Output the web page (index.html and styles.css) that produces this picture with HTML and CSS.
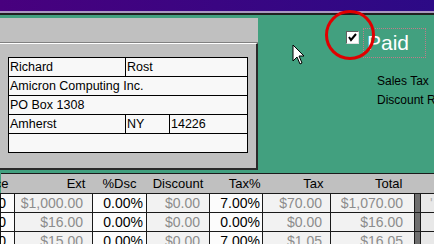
FILE: index.html
```html
<!DOCTYPE html>
<html lang="en">
<head>
    <meta charset="UTF-8">
    <title>Invoice</title>
    <link rel="stylesheet" href="styles.css">
</head>
<body>
    <div class="titlebar"></div>
    <div class="titlerule"></div>

    <div class="main">
        <div class="panel">
            <div class="band"></div>
            <div class="inner">
                <table class="address">
                    <colgroup>
                        <col class="w-first"><col class="w-state"><col>
                    </colgroup>
                    <tr><td>Richard</td><td colspan="2">Rost</td></tr>
                    <tr><td colspan="3">Amicron Computing Inc.</td></tr>
                    <tr><td colspan="3">PO Box 1308</td></tr>
                    <tr><td>Amherst</td><td>NY</td><td>14226</td></tr>
                    <tr class="last"><td colspan="3"></td></tr>
                </table>
            </div>
        </div>

        <div class="side">
            <div class="paid-row">
                <span class="checkbox">
                    <svg width="9" height="9" viewBox="0 0 9 9"><polyline points="1,4 3,7 8,1" fill="none" stroke="#000" stroke-width="2"/></svg>
                </span>
                <span class="paid">Paid</span>
            </div>
            <div class="label">Sales Tax</div>
            <div class="label">Discount Rate</div>

            <!-- overlay: cursor + highlight circle -->
            <svg class="cursor" width="14" height="22" viewBox="0 0 14 22"><path d="M1,1 L1,17 L5,13 L8,20 L10,19 L7,12 L12,12 Z" fill="#fff" stroke="#000" stroke-width="1"/></svg>
            <div class="circle"></div>
        </div>
    </div>

    <div class="grid-wrap">
        <table class="grid">
            <colgroup>
                <col style="width:14px"><col style="width:78px"><col style="width:54px"><col style="width:63px">
                <col style="width:53px"><col style="width:68px"><col style="width:84px"><col style="width:6px"><col style="width:30px">
            </colgroup>
            <tr class="head">
                <th class="cut p6">Price</th>
                <th class="p7">Ext</th>
                <th class="mid">%Dsc</th>
                <th class="mid">Discount</th>
                <th class="p2">Tax%</th>
                <th class="p7">Tax</th>
                <th class="p12">Total</th>
                <th></th>
                <th></th>
            </tr>
            <tr>
                <td class="cut dark p8">1,000.00</td>
                <td class="soft p9">$1,000.00</td>
                <td class="dark p3">0.00%</td>
                <td class="soft p9">$0.00</td>
                <td class="dark p2">7.00%</td>
                <td class="soft p8">$70.00</td>
                <td class="soft p11">$1,070.00</td>
                <td class="sep"></td>
                <td class="extra">'</td>
            </tr>
            <tr>
                <td class="cut dark p8">16.00</td>
                <td class="soft p9">$16.00</td>
                <td class="dark p3">0.00%</td>
                <td class="soft p9">$0.00</td>
                <td class="dark p2">0.00%</td>
                <td class="soft p8">$0.00</td>
                <td class="soft p11">$16.00</td>
                <td class="sep"></td>
                <td class="extra"></td>
            </tr>
            <tr>
                <td class="cut dark p8">15.00</td>
                <td class="soft p9">$15.00</td>
                <td class="dark p3">0.00%</td>
                <td class="soft p9">$0.00</td>
                <td class="dark p2">7.00%</td>
                <td class="soft p8">$1.05</td>
                <td class="soft p11">$16.05</td>
                <td class="sep"></td>
                <td class="extra"></td>
            </tr>
        </table>
    </div>
</body>
</html>
```

FILE: styles.css
```css
body {
    margin: 0;
    width: 434px;
    height: 244px;
    overflow: hidden;
    background-color: #42a07f;
    font-family: "Liberation Sans", Arial, sans-serif;
    color: #000;
}
.titlebar {
    height: 11px;
    background: linear-gradient(90deg, #48007e, #2c0a86);
}
.titlerule {
    height: 2px;
    background-color: #a898c0;
    border-bottom: 2px solid #202020;
}
.main {
    display: flex;
    height: 155px;
}
.panel {
    width: 258px;
    flex-shrink: 0;
    margin-top: 3px;
    display: flex;
    flex-direction: column;
}
.band {
    height: 24px;
    background-color: #c0c0c0;
    border-bottom: 1px solid #808080;
}
.inner {
    flex: 1;
    background-color: #c0c0c0;
    border-top: 1px solid #fff;
    border-right: 2px solid #2a2a2a;
    border-bottom: 2px solid #2a2a2a;
    padding: 13px 0 0 8px;
}
.address {
    width: 240px;
    border-collapse: collapse;
    table-layout: fixed;
    background-color: #f8f8f8;
    font-size: 12.5px;
}
.address .w-first {
    width: 117px;
}
.address .w-state {
    width: 44px;
}
.address td {
    border: 1px solid #000;
    height: 18px;
    padding: 0 1px;
    white-space: nowrap;
    overflow: hidden;
}
.address .last td {
    height: 18px;
}
.side {
    flex: 1;
    position: relative;
    min-width: 0;
}
.paid-row {
    display: flex;
    align-items: flex-start;
    margin-top: 13px;
    padding-left: 88px;
}
.checkbox {
    width: 11px;
    height: 11px;
    margin-top: 3px;
    background-color: #fff;
    border-top: 1px solid #606060;
    border-left: 1px solid #606060;
    border-right: 1px solid #e0e0e0;
    border-bottom: 1px solid #e0e0e0;
    display: flex;
    align-items: center;
    justify-content: center;
}
.paid {
    margin-left: 4px;
    width: 58px;
    height: 28px;
    padding-left: 3px;
    border: 1px dotted #c07c8a;
    color: #fff;
    font-size: 21px;
    line-height: 28px;
}
.label {
    padding-left: 119px;
    font-size: 12px;
    line-height: 19px;
    white-space: nowrap;
}
.paid-row + .label {
    margin-top: 14px;
}
.cursor {
    position: absolute;
    left: 34px;
    top: 29px;
}
.circle {
    position: absolute;
    left: 67px;
    top: -5px;
    width: 44px;
    height: 44px;
    border: 3px solid #e00000;
    border-radius: 50%;
}
.grid-wrap {
    margin-top: 3px;
}
.grid {
    width: 450px;
    border-collapse: collapse;
    table-layout: fixed;
    font-size: 14px;
}
.grid td {
    height: 18px;
    border: 1px solid #1a1a1a;
    padding: 0;
    white-space: nowrap;
    text-align: right;
}
.grid .head th {
    height: 19px;
    background-color: #c0c0c0;
    border-top: 1px solid #1a1a1a;
    border-bottom: 1px solid #1a1a1a;
    font-weight: normal;
    font-size: 13px;
    padding: 0;
    text-align: right;
    white-space: nowrap;
}
.grid .head th.mid {
    text-align: center;
}
.grid .cut {
    direction: rtl;
    text-align: left;
}
.grid .head th.cut {
    text-align: left;
}
.soft {
    color: #8c8c8c;
    background-color: #f2f2f2;
}
.dark {
    color: #000;
    background-color: #fcfcfc;
}
.sep {
    background-color: #6e6e6e;
}
.extra {
    background-color: #e8e8e8;
    color: #b0b0b0;
}
.grid td.extra {
    text-align: left;
    padding-left: 9px;
}
.p2 { padding-right: 2px !important; }
.p3 { padding-right: 3px !important; }
.p6 { padding-right: 6px !important; }
.p7 { padding-right: 7px !important; }
.p8 { padding-right: 8px !important; }
.p9 { padding-right: 9px !important; }
.p11 { padding-right: 11px !important; }
.p12 { padding-right: 12px !important; }
```
